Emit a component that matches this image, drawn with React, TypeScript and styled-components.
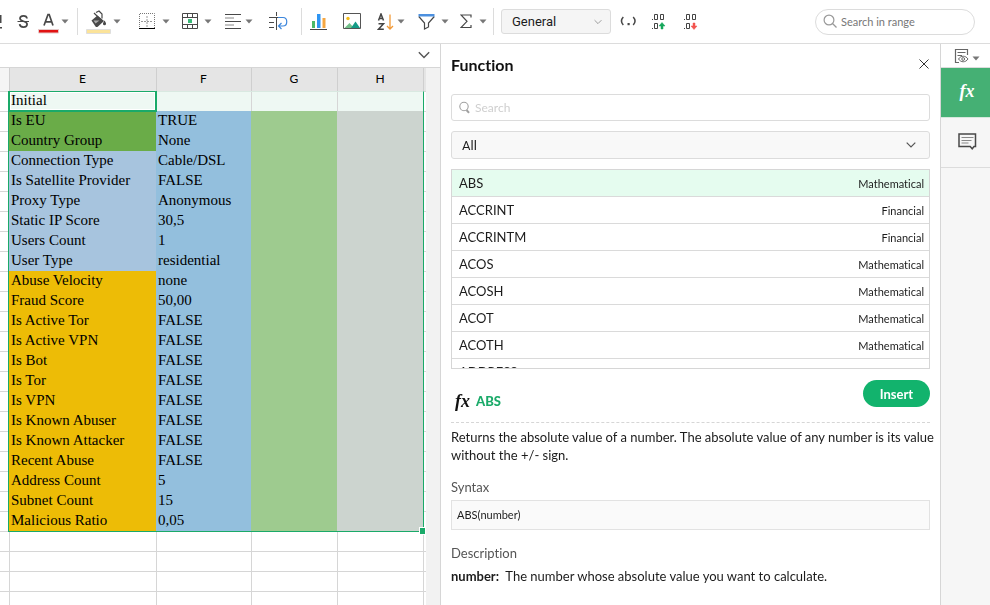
import React from "react";
import styled, { createGlobalStyle } from "styled-components";

const GREEN = "#1aaa69";
const LINE = "#d6d6d6";

const GlobalStyle = createGlobalStyle`
  *, *::before, *::after { box-sizing: border-box; }
  html, body, #root { height: 100%; }
  body { margin: 0; overflow: hidden; background: #fff; color: #1c1c1c; font: 13px/18px Lato, sans-serif; font-variant-ligatures: none; }
  button, input, select { font: inherit; color: inherit; margin: 0; }
  button { border: 0; padding: 0; background: none; cursor: pointer; }
`;

const Page = styled.div`
  display: flex;
  flex-direction: column;
  height: 100%;
`;

/* Toolbar */
const Toolbar = styled.header`
  display: flex;
  flex: none;
  align-items: center;
  height: 44px;
  padding-right: 15px;
  border-bottom: 1px solid #dcdcdc;
`;

const Tool = styled.button<{ $w: number; $gap?: number }>`
  display: flex;
  flex: none;
  align-items: center;
  gap: ${(p) => p.$gap ?? 0}px;
  width: ${(p) => p.$w}px;
  height: 43px;

  svg { flex: none; display: block; }
`;

const Divider = styled.span<{ $after: number }>`
  flex: none;
  width: 1px;
  height: 27px;
  margin-right: ${(p) => p.$after}px;
  background: #dcdcdc;
`;

const SelectWrap = styled.div`
  position: relative;
  display: flex;
  align-items: center;

  svg { position: absolute; right: 9px; pointer-events: none; }
`;

const FormatWrap = styled(SelectWrap)`
  flex: none;
  width: 110px;
  margin-right: 9px;
`;

const Select = styled.select`
  appearance: none;
  width: 100%;
  height: 28px;
  padding: 0 28px 0 10px;
  border: 1px solid #dcdcdc;
  border-radius: 3px;
  background: #f8f8f8;
  font: 13px Roboto, sans-serif;
`;

const FormatSelect = styled(Select)`
  height: 25px;
  background: #f5f5f5;
`;

const SearchBox = styled.label<{ $round?: boolean }>`
  display: flex;
  align-items: center;
  gap: ${(p) => (p.$round ? 3 : 4)}px;
  flex: none;
  width: ${(p) => (p.$round ? "160px" : "auto")};
  height: ${(p) => (p.$round ? 26 : 27)}px;
  margin-left: ${(p) => (p.$round ? "auto" : "0")};
  padding: 0 7px;
  border: 1px solid #dcdcdc;
  border-radius: ${(p) => (p.$round ? 13 : 3)}px;
  background: #fff;
  color: ${(p) => (p.$round ? "#777" : "#cfcfcf")};
  font-size: ${(p) => (p.$round ? 11 : 12)}px;

  svg { flex: none; }
  input { flex: 1; min-width: 0; padding: 0; border: 0; outline: 0; background: none; }
  input::placeholder { color: inherit; opacity: 1; }
`;

/* Sheet */
const Body = styled.div`
  display: flex;
  flex: 1;
  min-height: 0;
`;

const SheetArea = styled.main`
  display: flex;
  flex: 1;
  flex-direction: column;
  min-width: 0;
  border-right: 1px solid ${LINE};
`;

const FormulaBar = styled.div`
  display: flex;
  flex: none;
  align-items: center;
  justify-content: flex-end;
  height: 24px;
  padding-right: 10px;
  border-bottom: 1px solid ${LINE};
`;

const SheetRow = styled.div`
  display: flex;
  flex: 1;
  min-height: 0;
`;

const GridPane = styled.div`
  position: relative;
  flex: 1;
  min-width: 0;
  overflow: hidden;
`;

const ScrollTrack = styled.div`
  flex: none;
  width: 14px;
  background: #f2f2f2;
`;

const Table = styled.table`
  width: 100%;
  table-layout: fixed;
  border-collapse: separate;
  border-spacing: 0;
  color: #000;
`;

const Col = styled.col<{ $w?: number }>`
  width: ${(p) => (p.$w ? `${p.$w}px` : "auto")};
`;

const HeadCell = styled.th<{ $plain?: boolean }>`
  height: 23px;
  padding: 0 1px 1px 0;
  border-left: ${(p) => (p.$plain ? "0" : "1px solid #cfcfcf")};
  background: ${(p) => (p.$plain ? "#f5f5f5" : "#e5e5e5")};
  font: 12px/20px Lato, sans-serif;
`;

const Cell = styled.td<{ $fill?: string; $first?: boolean }>`
  height: 20px;
  padding: 0 0 2px 1px;
  overflow: hidden;
  border-top: 1px solid ${(p) => p.$fill ?? (p.$first ? "#eef8f3" : LINE)};
  border-left: ${(p) => (p.$fill ? `1px solid ${p.$fill}` : `1px solid ${LINE}`)};
  background: ${(p) => p.$fill ?? (p.$first ? "#eef8f3" : "#fff")};
  font: 15px/17px "Liberation Serif", serif;
  white-space: nowrap;

  &:first-child { border-left: 0; }
`;

const Selection = styled.div`
  position: absolute;
  top: 23px;
  left: 8px;
  width: 416px;
  height: 441px;
  border: 1px solid ${GREEN};
  border-top-color: #d9e9e1;
  pointer-events: none;
`;

const ActiveCell = styled.div`
  position: absolute;
  top: -1px;
  left: -1px;
  width: 149px;
  height: 21px;
  border: 2px solid ${GREEN};
  border-top-width: 1px;
  box-shadow: inset 0 0 0 1px #fff;
`;

const Handle = styled.div`
  position: absolute;
  right: -3px;
  bottom: -4px;
  width: 7px;
  height: 8px;
  border: 1px solid #fff;
  background: ${GREEN};
`;

/* Function panel */
const Panel = styled.section`
  flex: none;
  width: 499px;
  padding: 0 10px;
`;

const PanelHead = styled.div`
  display: flex;
  align-items: center;
  justify-content: space-between;
  height: 42px;
  margin-bottom: 8px;
`;

const Title = styled.h2`
  margin: 0;
  color: #111;
  font: 700 16px/20px Lato, sans-serif;
  font-variant-ligatures: none;
`;

const FilterWrap = styled(SelectWrap)`
  margin: 10px 0;

  svg { right: 14px; }
`;

const List = styled.ul`
  height: 200px;
  margin: 0;
  padding: 0;
  overflow-y: auto;
  scrollbar-width: none;
  border: 1px solid ${LINE};
  list-style: none;
`;

const Item = styled.button<{ $active?: boolean }>`
  display: flex;
  align-items: center;
  justify-content: space-between;
  width: 100%;
  height: 27px;
  padding: 0 5px 0 7px;
  border-bottom: 1px solid #dadada;
  background: ${(p) => (p.$active ? "#e5fcef" : "#fff")};
`;

const Category = styled.span`
  padding-top: 2px;
  font-size: 11px;
`;

const DetailHead = styled.div`
  display: flex;
  align-items: center;
  justify-content: space-between;
  height: 54px;
  padding-bottom: 4px;
  border-bottom: 1px dashed ${LINE};
`;

const Name = styled.strong`
  display: flex;
  align-items: center;
  gap: 6px;
  padding: 14px 0 0 4px;
  color: ${GREEN};
  font-weight: 900;
`;

const Fx = styled.span<{ $light?: boolean }>`
  color: ${(p) => (p.$light ? "#fff" : "#111")};
  font: italic 700 18px/20px "Liberation Serif", serif;
`;

const InsertButton = styled.button`
  width: 67px;
  height: 27px;
  border-radius: 14px;
  background: #12b36d;
  color: #fff;
  font: 700 13px/18px Lato, sans-serif;
`;

const Text = styled.p`
  margin: 5px -8px 0 0;
`;

const Label = styled.h3`
  margin: 14px 0 4px;
  color: #555;
  font: 13px/18px Lato, sans-serif;
  font-variant-ligatures: none;
`;

const Syntax = styled.code`
  display: block;
  height: 30px;
  padding: 0 5px;
  border: 1px solid #e2e2e2;
  background: #fafafa;
  font: 11px/28px Lato, sans-serif;
`;

/* Side rail */
const Rail = styled.nav`
  display: flex;
  flex: none;
  flex-direction: column;
  width: 50px;
  border-left: 1px solid ${LINE};
  background: #f6f6f6;
`;

const RailButton = styled.button<{ $kind?: "view" | "active" }>`
  display: flex;
  align-items: center;
  justify-content: center;
  gap: 3px;
  height: ${(p) => (p.$kind === "view" ? 24 : 50)}px;
  padding: ${(p) => (p.$kind === "view" ? "0 0 0 3px" : "0 0 3px 3px")};
  border-bottom: 1px solid ${(p) => (p.$kind === "active" ? "#d5e8dc" : "#dcdcdc")};
  background: ${(p) => (p.$kind === "active" ? "#45b074" : p.$kind === "view" ? "#fff" : "transparent")};

  svg + svg { margin-top: 6px; }
`;

/* Icons */
const Caret = () => (
  <svg width="8" height="5" viewBox="0 0 8 5"><path d="M.5.5h7L4 4.500z" fill="#777" /></svg>
);
const Chevron = ({ size = 10, color = "#555" }: { size?: number; color?: string }) => (
  <svg width={size} height={size} viewBox="0 0 10 10" fill="none" stroke={color} strokeWidth="1.2"><path d="M.7 2.700 5 7l4.300-4.300" /></svg>
);
const Magnifier = () => (
  <svg width="15" height="15" viewBox="0 0 15 15" fill="none" stroke="#999" strokeWidth="1.200"><circle cx="6" cy="6" r="4.900" /><path d="m9.500 9.500 4 4" /></svg>
);
const SmallMagnifier = () => (
  <svg width="12" height="13" viewBox="0 0 12 13" fill="none" stroke="#a0a0a0"><circle cx="5" cy="5.500" r="4.200" strokeWidth="1.100" /><path d="m7.500 9 2.500 2.800" strokeWidth="2" /></svg>
);
const Strike = () => (
  <svg width="13" height="15" viewBox="0 0 13 15" fill="none" stroke="#484848" strokeWidth="1.700"><path d="M10 4.500C9.800 2.700 8.500 1.800 6.500 1.800S3 2.800 3 4.500c0 1.400 1.200 2.100 3.500 2.800 2.500.7 3.600 1.500 3.600 3 0 1.800-1.500 2.800-3.600 2.800-2.200 0-3.700-1.100-3.900-2.900" /><path d="M.5 7.500h11.500" strokeWidth="1" /></svg>
);
const TextColor = () => (
  <svg width="22" height="24" viewBox="0 0 22 24"><path d="M6 15.500 10 4.500h1.200L15 15.500M7.500 11.800h6.200" fill="none" stroke="#484848" strokeWidth="1.700" /><path d="M.5 19.500h20v3.500H.5z" fill="#e11313" stroke="#e5c9c9" /></svg>
);
const Bucket = () => (
  <svg width="26" height="25" viewBox="0 0 26 25"><path d="m5.500 11.500 6-5 6.500 5.500-6 5.500c-1 .8-1.800.7-2.500 0z" fill="#484848" /><path d="m8 4 7 7M10 3.500l3-1.500 3 3v4.500" fill="none" stroke="#484848" strokeWidth="1.200" /><path d="M7.500 11.500h6l-4 3z" fill="#aaa" /><path d="M18.500 11.500c1 1.700 1.500 2.300 1.500 3.300a1.500 1.500 0 0 1-3 0c0-1 .6-1.600 1.500-3.300z" fill="#484848" /><path d="M.5 20.500h24v4H.5z" fill="#fbe39a" stroke="#dedede" /></svg>
);
const Borders = () => (
  <svg width="18" height="17" viewBox="0 0 18 17" fill="none"><path d="M1.500 16V.5h15V16" stroke="#777" strokeDasharray="1 1" /><path d="M9 3v11M3 8.500h12" stroke="#999" strokeDasharray="2 1" /><path d="M1 15.500h16" stroke="#000" /></svg>
);
const Merge = () => (
  <svg width="17" height="17" viewBox="0 0 17 17" fill="none" stroke="#484848"><path d="M.5.5h15v15H.5zM0 4.500h16M0 11.500h16M5.500 0v4.500M10.500 0v4.500M5.500 12v4M10.500 12v4" /><path d="M6 6h4v4H6z" fill="#39b978" stroke="none" /></svg>
);
const AlignLeft = () => (
  <svg width="17" height="16" viewBox="0 0 17 16" fill="none" stroke="#484848"><path d="M0 .5h16M0 7.500h16M0 14.500h16" /><path d="M0 4h9M0 11h9" stroke="#888" /></svg>
);
const Wrap = () => (
  <svg width="19" height="19" viewBox="0 0 19 19" fill="none" stroke="#484848"><path d="M0 5.500h5M0 10.500h5M0 15.500h5M7.500 0v4M7.500 6v12" /><path d="M9 5.500h5c5 0 5 8.500 0 8.500h-4m2.500-3L9.500 14l3 3" stroke="#3c86dc" strokeWidth="1.200" /><path d="M0 5.500h9" /></svg>
);
const Chart = () => (
  <svg width="17" height="18" viewBox="0 0 17 18"><path d="M2 8h3v7H2z" fill="#4bb968" /><path d="M7 1h3.500v14H7z" fill="#2e95f3" /><path d="M12.500 5h3v10h-3z" fill="#f5a742" /><path d="M0 16.500h17" stroke="#444" /></svg>
);
const Picture = () => (
  <svg width="19" height="17" viewBox="0 0 19 17"><path d="M.5.5h17v15H.5z" fill="#fff" stroke="#555" /><circle cx="5" cy="5.500" r="1.700" fill="#f5bd19" /><path d="m1.500 15 5-5 4.500 5z" fill="#73c08a" /><path d="m8 15 4.500-6.500L17 15z" fill="#159b87" /></svg>
);
const Sort = () => (
  <svg width="17" height="18" viewBox="0 0 17 18" fill="none" stroke="#444" strokeWidth="1.500"><path d="M1.500 7.500 4 1l2.500 6.500M2 5.500h4M1.500 10.800h5l-5 5.400h5.300" /><path d="M13 1.500V16m-3-3 3 3 3-3" stroke="#f29a38" strokeWidth="1.300" /></svg>
);
const Funnel = () => (
  <svg width="17" height="18" viewBox="0 0 17 18"><path d="M.8 3.500 6.500 10v6l4-2v-4l5.800-6.500" fill="none" stroke="#484848" strokeWidth="1.200" /><path d="M.5 1h16v2.500H.5z" fill="#4c90df" /></svg>
);
const Sigma = () => (
  <svg width="12" height="15" viewBox="0 0 12 15" fill="none" stroke="#484848" strokeWidth="1.200"><path d="M11 3.500V1H1l6 6.300L1 13.500h10V11" /></svg>
);
const Separator = () => (
  <svg width="17" height="12" viewBox="0 0 17 12" fill="none" stroke="#484848" strokeWidth="1.500"><path d="M3.300 1C1 3.500 1 6.500 3.300 9M13.200 1c2.300 2.500 2.300 5.500 0 8" /><path d="M7.500 7h2.200v2.200H7.500z" fill="#484848" stroke="none" /></svg>
);
const Decimals = ({ up }: { up?: boolean }) => (
  <svg width="14" height="16" viewBox="0 0 14 16" fill="none" stroke="#444"><path d="M2.500.5h3v5h-3zM8.500.5h3v5h-3zM2.500 9.500h3v5h-3z" /><path d="M.5 5v1M.5 14v1" /><path d={up ? "M9 15v-3H7l3-3.500 3 3.500h-2v3z" : "M9 9v3H7l3 3.500 3-3.500h-2V9z"} fill={up ? "#16a75b" : "#f2544f"} stroke={up ? "#16a75b" : "#f2544f"} strokeWidth=".5" /></svg>
);
const Close = () => (
  <svg width="12" height="12" viewBox="0 0 12 12" stroke="#333"><path d="m1.500 1.500 9 9m0-9-9 9" /></svg>
);
const ViewDoc = () => (
  <svg width="15" height="16" viewBox="0 0 15 16" fill="none" stroke="#666"><path d="M5 14.500H1.500V1.500h12V7M3.500 4.500h8M3.500 7.500H8" strokeWidth="1.200" /><path d="M4.500 11c2.500-3.700 7-3.700 9.500 0-2.500 3.700-7 3.700-9.500 0z" /><circle cx="9.200" cy="11" r="1.400" /></svg>
);
const Comment = () => (
  <svg width="19" height="17" viewBox="0 0 19 17" fill="none"><path d="M1 1h16.500v12.500H16l-1.800 2.300-2-2.300H1z" stroke="#484848" strokeWidth="1.500" /><path d="M3.500 4.500h12M3.500 7.500h10M3.500 10h7" stroke="#888" /></svg>
);
const UnderlineGlyph = () => (
  <svg width="3" height="15" viewBox="0 0 3 15"><path d="M0 1h1.500v8H0zM0 13h2v1.500H0z" fill="#484848" /></svg>
);

const rows: [string, string][] = [
  ["Initial", ""], ["Is EU", "TRUE"], ["Country Group", "None"], ["Connection Type", "Cable/DSL"],
  ["Is Satellite Provider", "FALSE"], ["Proxy Type", "Anonymous"], ["Static IP Score", "30,5"],
  ["Users Count", "1"], ["User Type", "residential"], ["Abuse Velocity", "none"], ["Fraud Score", "50,00"],
  ["Is Active Tor", "FALSE"], ["Is Active VPN", "FALSE"], ["Is Bot", "FALSE"], ["Is Tor", "FALSE"],
  ["Is VPN", "FALSE"], ["Is Known Abuser", "FALSE"], ["Is Known Attacker", "FALSE"],
  ["Recent Abuse", "FALSE"], ["Address Count", "5"], ["Subnet Count", "15"], ["Malicious Ratio", "0,05"],
];
const emptyRows = Array.from({ length: 30 }, (_, i) => i);
const labelFill = (i: number) => (i < 3 ? "#6aac48" : i < 9 ? "#a7c4de" : "#edbc06");

const functions: [string, string][] = [
  ["ABS", "Mathematical"], ["ACCRINT", "Financial"], ["ACCRINTM", "Financial"], ["ACOS", "Mathematical"],
  ["ACOSH", "Mathematical"], ["ACOT", "Mathematical"], ["ACOTH", "Mathematical"], ["ADDRESS", "Lookup"],
];

export default function App() {
  return (
    <Page>
      <GlobalStyle />
      <Toolbar>
        <Tool $w={17} aria-label="Underline"><UnderlineGlyph /></Tool>
        <Tool $w={21} aria-label="Strikethrough"><Strike /></Tool>
        <Tool $w={39} $gap={1} aria-label="Text color"><TextColor /><Caret /></Tool>
        <Divider $after={8} />
        <Tool $w={52} $gap={1} aria-label="Fill color"><Bucket /><Caret /></Tool>
        <Tool $w={44} $gap={6} aria-label="Borders"><Borders /><Caret /></Tool>
        <Tool $w={43} $gap={5} aria-label="Merge cells"><Merge /><Caret /></Tool>
        <Tool $w={44} $gap={3} aria-label="Align"><AlignLeft /><Caret /></Tool>
        <Tool $w={32} aria-label="Wrap text"><Wrap /></Tool>
        <Divider $after={8} />
        <Tool $w={33} aria-label="Chart"><Chart /></Tool>
        <Tool $w={34} aria-label="Image"><Picture /></Tool>
        <Tool $w={41} $gap={3} aria-label="Sort"><Sort /><Caret /></Tool>
        <Tool $w={42} $gap={6} aria-label="Filter"><Funnel /><Caret /></Tool>
        <Tool $w={33} $gap={7} aria-label="Sum"><Sigma /><Caret /></Tool>
        <Divider $after={7} />
        <FormatWrap>
          <FormatSelect aria-label="Number format"><option>General</option></FormatSelect>
          <Chevron size={8} color="#999" />
        </FormatWrap>
        <Tool $w={32} aria-label="Thousands separator"><Separator /></Tool>
        <Tool $w={32} aria-label="Increase decimals"><Decimals up /></Tool>
        <Tool $w={32} aria-label="Decrease decimals"><Decimals /></Tool>
        <SearchBox $round><Magnifier /><input aria-label="Search in range" placeholder="Search in range" /></SearchBox>
      </Toolbar>
      <Body>
        <SheetArea>
          <FormulaBar><button aria-label="Expand formula bar"><Chevron size={12} /></button></FormulaBar>
          <SheetRow>
            <GridPane>
              <Table>
                <colgroup><Col $w={9} /><Col $w={147} /><Col $w={95} /><Col $w={86} /><Col $w={86} /><Col /></colgroup>
                <thead>
                  <tr>
                    <HeadCell $plain />
                    {["E", "F", "G", "H"].map((c) => <HeadCell key={c} scope="col">{c}</HeadCell>)}
                    <HeadCell />
                  </tr>
                </thead>
                <tbody>
                  {rows.map(([label, value], i) => (
                    <tr key={label}>
                      <Cell />
                      <Cell $first={i === 0} $fill={i ? labelFill(i) : undefined}>{label}</Cell>
                      <Cell $first={i === 0} $fill={i ? "#93bfdd" : undefined}>{value}</Cell>
                      <Cell $first={i === 0} $fill={i ? "#9ecb8f" : undefined} />
                      <Cell $first={i === 0} $fill={i ? "#ccd4cf" : undefined} />
                      <Cell />
                    </tr>
                  ))}
                  {emptyRows.map((i) => <tr key={i}><Cell /><Cell /><Cell /><Cell /><Cell /><Cell /></tr>)}
                </tbody>
              </Table>
              <Selection><ActiveCell /><Handle /></Selection>
            </GridPane>
            <ScrollTrack />
          </SheetRow>
        </SheetArea>
        <Panel>
          <PanelHead><Title>Function</Title><button aria-label="Close"><Close /></button></PanelHead>
          <SearchBox><SmallMagnifier /><input aria-label="Search functions" placeholder="Search" /></SearchBox>
          <FilterWrap>
            <Select aria-label="Category"><option>All</option></Select>
            <Chevron />
          </FilterWrap>
          <List>
            {functions.map(([name, category], i) => (
              <li key={name}><Item $active={i === 0}><span>{name}</span><Category>{category}</Category></Item></li>
            ))}
          </List>
          <DetailHead>
            <Name><Fx>fx</Fx>ABS</Name>
            <InsertButton>Insert</InsertButton>
          </DetailHead>
          <Text>Returns the absolute value of a number. The absolute value of any number is its value without the +/- sign.</Text>
          <Label>Syntax</Label>
          <Syntax>ABS(number)</Syntax>
          <Label>Description</Label>
          <Text><b>number:</b>&nbsp; The number whose absolute value you want to calculate.</Text>
        </Panel>
        <Rail>
          <RailButton $kind="view" aria-label="View options"><ViewDoc /><Caret /></RailButton>
          <RailButton $kind="active" aria-label="Functions"><Fx $light>fx</Fx></RailButton>
          <RailButton aria-label="Comments"><Comment /></RailButton>
        </Rail>
      </Body>
    </Page>
  );
}
